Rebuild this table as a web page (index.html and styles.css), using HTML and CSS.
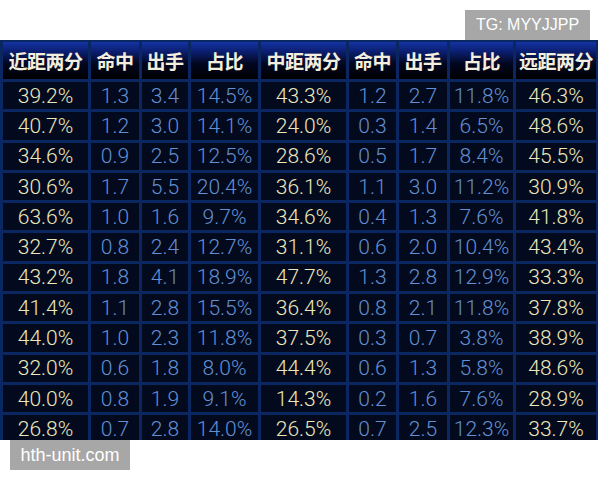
FILE: index.html
```html
<!DOCTYPE html>
<html lang="zh">
<head>
<meta charset="utf-8">
<link rel="stylesheet" href="styles.css">
</head>
<body>
<div class="page">
  <div class="board">
    <div class="grid">
      <div class="h">近距两分</div><div class="h">命中</div><div class="h">出手</div><div class="h">占比</div><div class="h">中距两分</div><div class="h">命中</div><div class="h">出手</div><div class="h">占比</div><div class="h">远距两分</div>
      <div class="c y">39.2%</div><div class="c b">1.3</div><div class="c b">3.4</div><div class="c b">14.5%</div><div class="c y">43.3%</div><div class="c b">1.2</div><div class="c b">2.7</div><div class="c b">11.8%</div><div class="c y">46.3%</div>
      <div class="c y">40.7%</div><div class="c b">1.2</div><div class="c b">3.0</div><div class="c b">14.1%</div><div class="c y">24.0%</div><div class="c b">0.3</div><div class="c b">1.4</div><div class="c b">6.5%</div><div class="c y">48.6%</div>
      <div class="c y">34.6%</div><div class="c b">0.9</div><div class="c b">2.5</div><div class="c b">12.5%</div><div class="c y">28.6%</div><div class="c b">0.5</div><div class="c b">1.7</div><div class="c b">8.4%</div><div class="c y">45.5%</div>
      <div class="c y">30.6%</div><div class="c b">1.7</div><div class="c b">5.5</div><div class="c b">20.4%</div><div class="c y">36.1%</div><div class="c b">1.1</div><div class="c b">3.0</div><div class="c b">11.2%</div><div class="c y">30.9%</div>
      <div class="c y">63.6%</div><div class="c b">1.0</div><div class="c b">1.6</div><div class="c b">9.7%</div><div class="c y">34.6%</div><div class="c b">0.4</div><div class="c b">1.3</div><div class="c b">7.6%</div><div class="c y">41.8%</div>
      <div class="c y">32.7%</div><div class="c b">0.8</div><div class="c b">2.4</div><div class="c b">12.7%</div><div class="c y">31.1%</div><div class="c b">0.6</div><div class="c b">2.0</div><div class="c b">10.4%</div><div class="c y">43.4%</div>
      <div class="c y">43.2%</div><div class="c b">1.8</div><div class="c b">4.1</div><div class="c b">18.9%</div><div class="c y">47.7%</div><div class="c b">1.3</div><div class="c b">2.8</div><div class="c b">12.9%</div><div class="c y">33.3%</div>
      <div class="c y">41.4%</div><div class="c b">1.1</div><div class="c b">2.8</div><div class="c b">15.5%</div><div class="c y">36.4%</div><div class="c b">0.8</div><div class="c b">2.1</div><div class="c b">11.8%</div><div class="c y">37.8%</div>
      <div class="c y">44.0%</div><div class="c b">1.0</div><div class="c b">2.3</div><div class="c b">11.8%</div><div class="c y">37.5%</div><div class="c b">0.3</div><div class="c b">0.7</div><div class="c b">3.8%</div><div class="c y">38.9%</div>
      <div class="c y">32.0%</div><div class="c b">0.6</div><div class="c b">1.8</div><div class="c b">8.0%</div><div class="c y">44.4%</div><div class="c b">0.6</div><div class="c b">1.3</div><div class="c b">5.8%</div><div class="c y">48.6%</div>
      <div class="c y">40.0%</div><div class="c b">0.8</div><div class="c b">1.9</div><div class="c b">9.1%</div><div class="c y">14.3%</div><div class="c b">0.2</div><div class="c b">1.6</div><div class="c b">7.6%</div><div class="c y">28.9%</div>
      <div class="c y">26.8%</div><div class="c b">0.7</div><div class="c b">2.8</div><div class="c b">14.0%</div><div class="c y">26.5%</div><div class="c b">0.7</div><div class="c b">2.5</div><div class="c b">12.3%</div><div class="c y">33.7%</div>
    </div>
  </div>
  <div class="tag tag-tg">TG: MYYJJPP</div>
  <div class="tag tag-site">hth-unit.com</div>
</div>
</body>
</html>
```

FILE: styles.css
```css
html, body {
  margin: 0;
  padding: 0;
  background: #ffffff;
}
.page {
  position: relative;
  width: 600px;
  height: 480px;
  padding-top: 40px;
  box-sizing: border-box;
}
.board {
  width: 598px;
  height: 400px;
  overflow: hidden;
  background: #0a2762;
}
.grid {
  display: grid;
  grid-template-columns: 85px 48px 46px 67px 85px 47px 48px 63px 80px;
  grid-template-rows: 37px;
  grid-auto-rows: 27.3px;
  column-gap: 3px;
  row-gap: 3px;
  padding: 2px 2px 0 3px;
}
.h {
  display: flex;
  align-items: center;
  justify-content: center;
  background: linear-gradient(180deg, #1434a4 0%, #0b1f72 25%, #020720 58%, #000000 100%);
  color: #f3eedd;
  font-family: "Noto Sans CJK SC", sans-serif;
  font-weight: 700;
  font-size: 19px;
  letter-spacing: -0.5px;
  white-space: nowrap;
}
.c {
  display: flex;
  align-items: center;
  justify-content: center;
  background: #040a1e;
  font-family: Roboto, "Liberation Sans", Arial, sans-serif;
  font-weight: 300;
  font-size: 21px;
  white-space: nowrap;
}
.y {
  color: #ebe8bc;
}
.b {
  color: #6290d2;
}
.tag {
  position: absolute;
  background: #a7a7a7;
  color: #ffffff;
  font-family: "Liberation Sans", Arial, sans-serif;
  display: flex;
  align-items: center;
  justify-content: center;
  height: 30px;
}
.tag-tg {
  left: 465px;
  top: 10px;
  width: 125px;
  font-size: 16px;
}
.tag-site {
  left: 10px;
  top: 440px;
  width: 120px;
  font-size: 18px;
}
```
